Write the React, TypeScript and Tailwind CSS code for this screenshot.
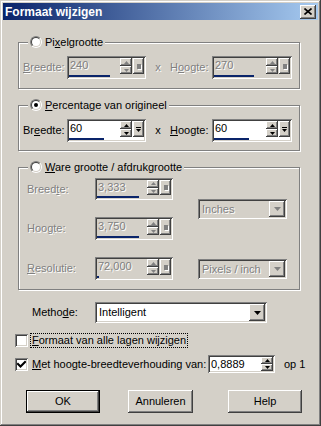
import React from 'react';

const raised = 'shadow-[inset_-1px_-1px_#404040,inset_1px_1px_#fff,inset_-2px_-2px_#808080,inset_2px_2px_#d4d0c8]';
const sunken = 'shadow-[inset_1px_1px_#808080,inset_-1px_-1px_#fff,inset_2px_2px_#404040,inset_-2px_-2px_#d4d0c8]';
const etched = 'border border-[#808080] shadow-[inset_1px_1px_#fff,1px_1px_#fff]';
const grayText = 'text-[#808080] [text-shadow:1px_1px_0_#fff]';

const Radio = ({ checked }: { checked?: boolean }) => (
  <span className="block w-[12px] h-[12px] rounded-full border border-t-[#808080] border-l-[#808080] border-r-white border-b-white">
    <span className="flex w-full h-full rounded-full border border-t-[#404040] border-l-[#404040] border-r-[#d4d0c8] border-b-[#d4d0c8] bg-white items-center justify-center">
      {checked && <span className="block w-[4px] h-[4px] rounded-full bg-black" />}
    </span>
  </span>
);

const Check = ({ checked }: { checked?: boolean }) => (
  <span className={`${sunken} flex w-[13px] h-[13px] bg-white items-center justify-center`}>
    {checked && (
      <svg width="9" height="9" viewBox="0 0 9 9">
        <path d="M1 4 L3.5 6.5 L8 2" stroke="#000" strokeWidth="2" fill="none" strokeLinecap="square" />
      </svg>
    )}
  </span>
);

const Arrow = ({ up, disabled }: { up?: boolean; disabled?: boolean }) => (
  <svg width="5" height="3" viewBox="0 0 5 3" className="block">
    <path d={up ? 'M2.5 0 L5 3 L0 3 Z' : 'M0 0 L5 0 L2.5 3 Z'} fill={disabled ? '#808080' : '#000'} />
  </svg>
);

const SpinBox = ({
  value,
  disabled,
  bar,
  drop = true,
  className,
}: {
  value: string;
  disabled?: boolean;
  bar?: number;
  drop?: boolean;
  className: string;
}) => (
  <div className={`${sunken} ${disabled ? 'bg-[#d4d0c8]' : 'bg-white'} p-[2px] flex flex-col ${className}`}>
    <div className="flex flex-1 min-h-0">
      <span className={`flex-1 pl-[1px] leading-[14px] ${disabled ? grayText : 'text-black'}`}>{value}</span>
      <span className="flex flex-col w-[12px]">
        <span className={`${raised} bg-[#d4d0c8] flex-1 flex items-center justify-center`}>
          <Arrow up disabled={disabled} />
        </span>
        <span className={`${raised} bg-[#d4d0c8] flex-1 flex items-center justify-center`}>
          <Arrow disabled={disabled} />
        </span>
      </span>
      {drop && (
        <span className={`${raised} bg-[#d4d0c8] w-[11px] ml-[1px] flex flex-col items-center justify-center gap-[1px]`}>
          {disabled ? (
            <span className="block w-[4px] h-[5px] bg-[#808080] shadow-[1px_1px_0_#fff]" />
          ) : (
            <>
              <span className="block w-[5px] h-[1px] bg-black" />
              <Arrow />
            </>
          )}
        </span>
      )}
    </div>
    {bar !== undefined && (
      <div className="h-[3px] flex items-end">
        <span className="block h-[2px] bg-[#0a246a]" style={{ width: bar }} />
      </div>
    )}
  </div>
);

const Combo = ({ text, disabled, className }: { text: string; disabled?: boolean; className: string }) => (
  <div className={`${sunken} ${disabled ? 'bg-[#d4d0c8]' : 'bg-white'} p-[2px] flex ${className}`}>
    <span className={`flex-1 pl-[2px] flex items-center ${disabled ? grayText : 'text-black'}`}>{text}</span>
    <span className={`${raised} bg-[#d4d0c8] w-[16px] flex items-center justify-center`}>
      <svg width="7" height="4" viewBox="0 0 7 4" className="block">
        <path d="M0 0 L7 0 L3.5 4 Z" fill={disabled ? '#808080' : '#000'} />
      </svg>
    </span>
  </div>
);

const Button = ({ label, def, className }: { label: string; def?: boolean; className: string }) => (
  <div className={`${def ? 'border border-black' : ''} ${className}`}>
    <div className={`${raised} bg-[#d4d0c8] w-full h-full flex items-center justify-center text-black`}>{label}</div>
  </div>
);

export default function App() {
  return (
    <div className="w-[321px] h-[426px] bg-[#d4d0c8] font-['Liberation_Sans',Arial,sans-serif] text-[11px] text-black pt-[3px] shadow-[inset_-1px_-1px_#404040,inset_1px_1px_#d4d0c8,inset_-2px_-2px_#808080,inset_2px_2px_#fff] overflow-hidden">
      {/* title bar */}
      <div className="mx-[3px] h-[17px] bg-[linear-gradient(to_right,#0a246a,#a6caf0)] flex items-center justify-between pl-[2px] pr-[2px]">
        <span className="text-white font-bold text-[12px] leading-none">Formaat wijzigen</span>
        <span className={`${raised} bg-[#d4d0c8] w-[16px] h-[14px] flex items-center justify-center`}>
          <svg width="8" height="7" viewBox="0 0 8 7">
            <path d="M0.5 0.5 L7.5 6.5 M7.5 0.5 L0.5 6.5" stroke="#000" strokeWidth="1.6" />
          </svg>
        </span>
      </div>

      {/* Pixelgrootte */}
      <div className={`relative ml-[18px] mt-[22px] w-[282px] h-[47px] ${etched}`}>
        <div className="absolute left-[9px] -top-[8px] h-[14px] px-[2px] bg-[#d4d0c8] flex items-center gap-[3px]">
          <Radio />
          <span>
            Pi<u>x</u>elgrootte
          </span>
        </div>
        <div className="flex items-center mt-[13px] ml-[4px]">
          <span className={`w-[44px] ${grayText}`}>
            <u>B</u>reedte:
          </span>
          <SpinBox className="w-[79px] h-[23px]" value="240" disabled bar={41} />
          <span className={`w-[24px] text-center ${grayText}`}>x</span>
          <span className={`w-[42px] ${grayText}`}>
            H<u>o</u>ogte:
          </span>
          <SpinBox className="w-[80px] h-[23px]" value="270" disabled bar={40} />
        </div>
      </div>

      {/* Percentage */}
      <div className={`relative ml-[18px] mt-[16px] w-[282px] h-[46px] ${etched}`}>
        <div className="absolute left-[9px] -top-[8px] h-[14px] px-[2px] bg-[#d4d0c8] flex items-center gap-[3px]">
          <Radio checked />
          <span>
            <u>P</u>ercentage van origineel
          </span>
        </div>
        <div className="flex items-center mt-[13px] ml-[4px]">
          <span className="w-[44px]">
            Br<u>e</u>edte:
          </span>
          <SpinBox className="w-[79px] h-[23px]" value="60" bar={35} />
          <span className="w-[24px] text-center">x</span>
          <span className="w-[42px]">
            <u>H</u>oogte:
          </span>
          <SpinBox className="w-[80px] h-[23px]" value="60" bar={35} />
        </div>
      </div>

      {/* Ware grootte */}
      <div className={`relative ml-[18px] mt-[16px] w-[282px] h-[123px] ${etched}`}>
        <div className="absolute left-[9px] -top-[8px] h-[14px] px-[2px] bg-[#d4d0c8] flex items-center gap-[3px]">
          <Radio />
          <span>
            <u>W</u>are grootte / afdrukgrootte
          </span>
        </div>
        <div className="flex ml-[8px]">
          <div className="flex flex-col mt-[10px] gap-[17px]">
            <div className="flex items-center">
              <span className={`w-[68px] ${grayText}`}>
                Breed<u>t</u>e:
              </span>
              <SpinBox className="w-[78px] h-[22px]" value="3,333" disabled bar={42} />
            </div>
            <div className="flex items-center">
              <span className={`w-[68px] ${grayText}`}>
                Hoo<u>g</u>te:
              </span>
              <SpinBox className="w-[78px] h-[23px]" value="3,750" disabled bar={42} />
            </div>
            <div className="flex items-center">
              <span className={`w-[68px] ${grayText}`}>
                <u>R</u>esolutie:
              </span>
              <SpinBox className="w-[78px] h-[23px]" value="72,000" disabled bar={2} />
            </div>
          </div>
          <div className="flex flex-col ml-[25px] mt-[31px] gap-[40px]">
            <Combo className="w-[89px] h-[20px]" text="Inches" disabled />
            <Combo className="w-[89px] h-[20px]" text="Pixels / inch" disabled />
          </div>
        </div>
      </div>

      {/* Methode */}
      <div className="flex items-center mt-[12px] ml-[32px] h-[21px]">
        <span className="w-[63px]">
          Metho<u>d</u>e:
        </span>
        <Combo className="w-[172px] h-[21px]" text="Intelligent" />
      </div>

      <div className="flex items-center mt-[10px] ml-[15px] h-[15px]">
        <Check />
        <span className="ml-[2px] px-[1px] h-[15px] flex items-center border border-dotted border-black">
          <u>F</u>ormaat van alle lagen wijzigen
        </span>
      </div>

      <div className="flex items-center mt-[7px] ml-[15px] h-[18px]">
        <Check checked />
        <span className="w-[180px] pl-[4px]">
          <u>M</u>et hoogte-breedteverhouding van:
        </span>
        <SpinBox className="w-[67px] h-[18px]" value="0,8889" drop={false} />
        <span className="ml-[9px]">op 1</span>
      </div>

      <div className="flex mt-[17px] h-[23px]">
        <Button className="ml-[26px] w-[74px]" label="OK" def />
        <Button className="ml-[28px] w-[65px]" label="Annuleren" />
        <Button className="ml-[35px] w-[74px]" label="Help" />
      </div>
    </div>
  );
}
